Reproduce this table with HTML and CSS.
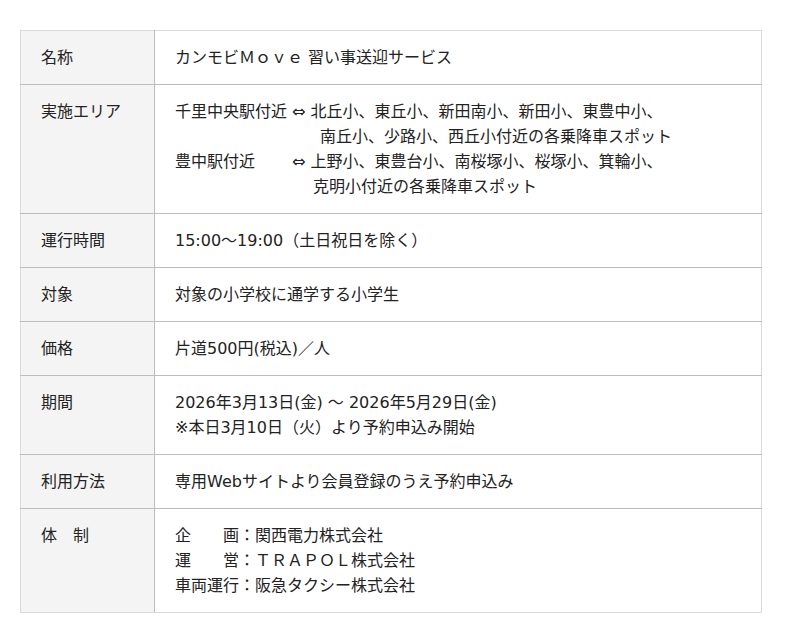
FILE: index.html
```html
<!DOCTYPE html>
<html lang="ja">
<head>
<meta charset="utf-8">
<link rel="stylesheet" href="styles.css">
</head>
<body>
<table class="spec">
  <tr><th>名称</th><td>カンモビＭｏｖｅ 習い事送迎サービス</td></tr>
  <tr><th>実施エリア</th><td>
    <div>千里中央駅付近 ⇔ 北丘小、東丘小、新田南小、新田小、東豊中小、</div>
    <div class="ind1">南丘小、少路小、西丘小付近の各乗降車スポット</div>
    <div>豊中駅付近　　 ⇔ 上野小、東豊台小、南桜塚小、桜塚小、箕輪小、</div>
    <div class="ind2">克明小付近の各乗降車スポット</div>
  </td></tr>
  <tr><th>運行時間</th><td>15:00～19:00（土日祝日を除く）</td></tr>
  <tr><th>対象</th><td>対象の小学校に通学する小学生</td></tr>
  <tr><th>価格</th><td>片道500円(税込)／人</td></tr>
  <tr><th>期間</th><td>2026年3月13日(金) ～ 2026年5月29日(金)<br>※本日3月10日（火）より予約申込み開始</td></tr>
  <tr><th>利用方法</th><td>専用Webサイトより会員登録のうえ予約申込み</td></tr>
  <tr><th>体　制</th><td>企　　画：関西電力株式会社<br>運　　営：ＴＲＡＰＯＬ株式会社<br>車両運行：阪急タクシー株式会社</td></tr>
</table>
</body>
</html>
```
FILE: styles.css
```css
html, body { margin: 0; background: #fff; }
body { padding: 30px 20px; font-family: "DejaVu Sans", "Noto Sans CJK JP", sans-serif; font-size: 16px; color: #222; }
.spec { border-collapse: collapse; width: 742px; }
.spec th, .spec td { border: 1px solid #bdbdbd; padding: 14px 20px; line-height: 25px; vertical-align: top; text-align: left; font-weight: normal; }
.spec th { width: 93px; background: #f4f4f4; border-left-color: #dadada; }
.spec td { border-right-color: #dadada; }
.spec tr:first-child > * { border-top-color: #dadada; }
.spec tr:last-child > * { border-bottom-color: #dadada; }
.ind1 { padding-left: 145px; }
.ind2 { padding-left: 138px; }
```
